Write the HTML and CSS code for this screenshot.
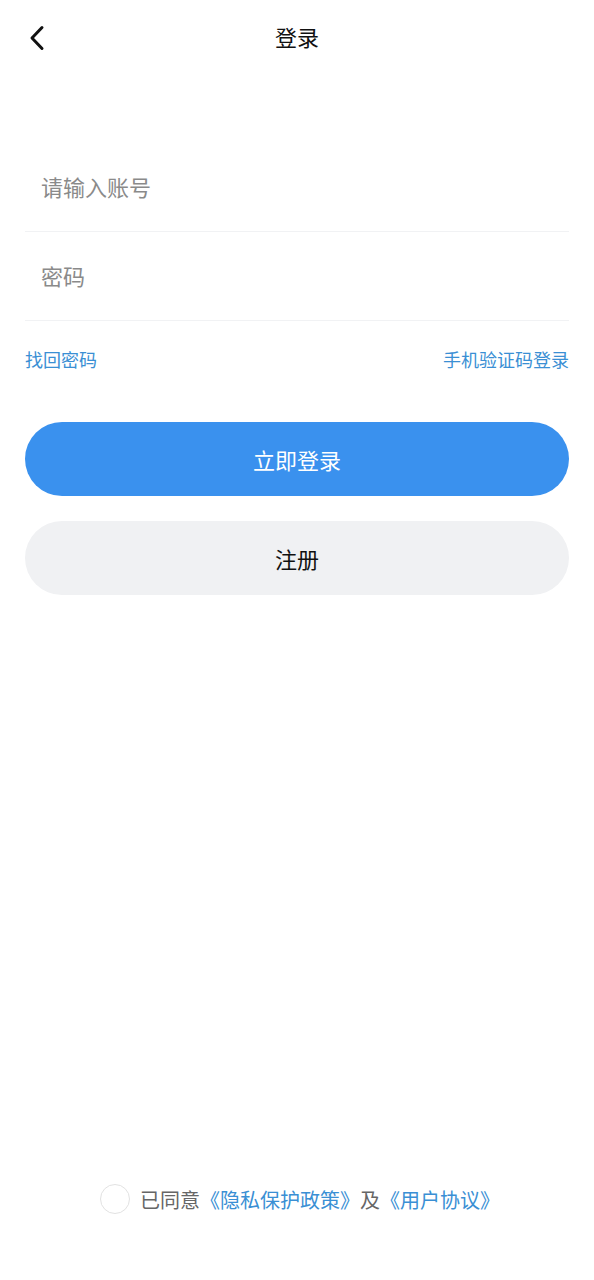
FILE: index.html
```html
<!DOCTYPE html>
<html lang="zh-CN">
<head>
<meta charset="utf-8">
<title>登录</title>
<link rel="stylesheet" href="styles.css">
</head>
<body>
<div class="page">
  <header class="nav">
    <button class="back" aria-label="返回">
      <svg width="16" height="26" viewBox="0 0 16 26"><path d="M13 2.5 L3 13 L13 23.5" fill="none" stroke="#111" stroke-width="3" stroke-linecap="round" stroke-linejoin="round"/></svg>
    </button>
    <h1 class="title">登录</h1>
  </header>

  <form class="form">
    <div class="field"><input class="input" type="text" placeholder="请输入账号"></div>
    <div class="field"><input class="input" type="password" placeholder="密码"></div>
    <div class="links">
      <a class="link">找回密码</a>
      <a class="link">手机验证码登录</a>
    </div>
    <button type="button" class="btn btn-primary">立即登录</button>
    <button type="button" class="btn btn-secondary">注册</button>
  </form>

  <footer class="agree">
    <span class="radio"></span>
    <span class="agree-text">已同意<a class="link-blue">《隐私保护政策》</a>及<a class="link-blue">《用户协议》</a></span>
  </footer>
</div>
</body>
</html>
```

FILE: styles.css
```css
* { box-sizing: border-box; }
html, body { margin: 0; padding: 0; background: #fff; }
body {
  font-family: "Noto Sans CJK SC", "Noto Sans", sans-serif;
  color: #111;
}
.page {
  width: 594px;
  height: 1280px;
  display: flex;
  flex-direction: column;
  padding: 0 25px;
}
.nav {
  height: 76px;
  display: flex;
  align-items: center;
  justify-content: center;
  position: relative;
}
.back {
  position: absolute;
  left: 4px;
  top: 25px;
  border: 0;
  background: none;
  padding: 0;
  width: 16px;
  height: 26px;
  display: flex;
}
.title {
  margin: 0 0 4px;
  font-size: 22px;
  font-weight: 400;
  line-height: 1;
  color: #111;
}
.form {
  display: flex;
  flex-direction: column;
  margin-top: 67px;
}
.field {
  height: 89px;
  border-bottom: 1px solid #f1f2f4;
  display: flex;
  align-items: center;
}
.input {
  border: 0;
  outline: none;
  width: 100%;
  padding: 0 0 0 16px;
  font-family: inherit;
  font-size: 22px;
  color: #333;
  background: transparent;
  margin-top: -2px;
}
.input::placeholder { color: #8a8a8a; }
.links {
  display: flex;
  justify-content: space-between;
  align-items: center;
  height: 78px;
  padding-bottom: 2px;
}
.link {
  font-size: 18px;
  color: #3a8fd4;
}
.btn {
  height: 74px;
  border: 0;
  border-radius: 37px;
  font-family: inherit;
  font-size: 22px;
  display: flex;
  align-items: center;
  justify-content: center;
  width: 100%;
}
.btn-primary {
  background: #3a91ee;
  color: #fff;
  margin-top: 23px;
}
.btn-secondary {
  background: #f0f1f3;
  color: #111;
  margin-top: 25px;
}
.agree {
  margin-top: auto;
  margin-bottom: 66px;
  display: flex;
  align-items: center;
  justify-content: center;
  gap: 10px;
  padding-left: 6px;
}
.radio {
  width: 30px;
  height: 30px;
  border-radius: 50%;
  border: 1.5px solid #e2e2e2;
}
.agree-text {
  font-size: 20px;
  color: #666;
}
.link-blue { color: #3a8fd4; }
```
